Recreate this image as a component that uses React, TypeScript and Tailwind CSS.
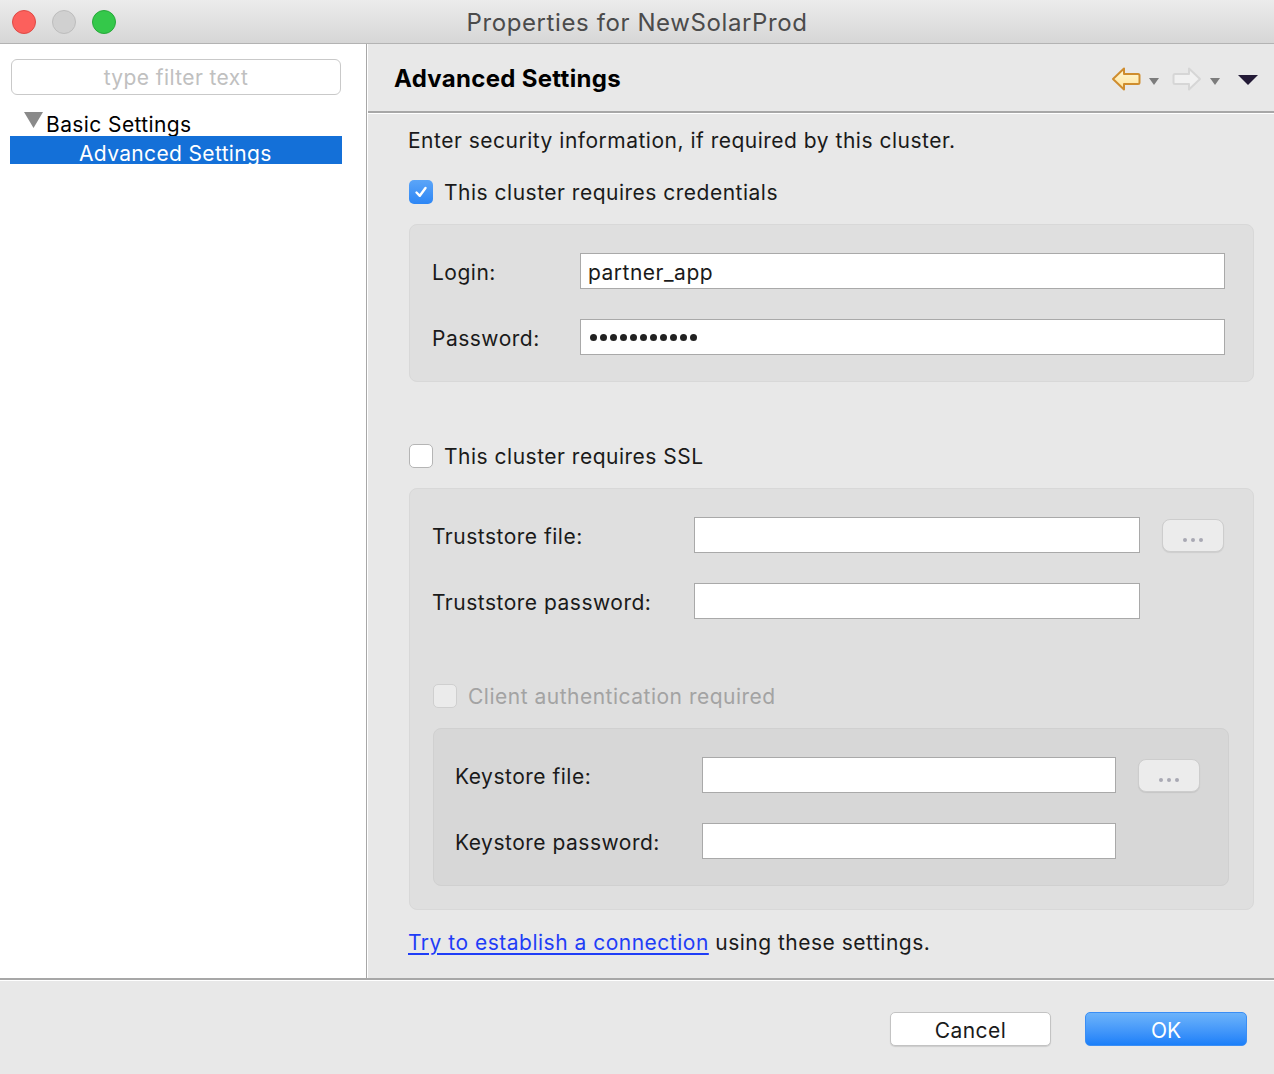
import React from "react"

function TrafficLights() {
  return (
    <div className="absolute left-[12px] top-[10px] flex gap-[16px]">
      <div className="w-[24px] h-[24px] rounded-full bg-[#fc605c] border border-[#de4a45]" />
      <div className="w-[24px] h-[24px] rounded-full bg-[#d0d0d0] border border-[#bdbdbd]" />
      <div className="w-[24px] h-[24px] rounded-full bg-[#34c84a] border border-[#27a83a]" />
    </div>
  )
}

function SmallCaret() {
  return (
    <svg width="10" height="7" viewBox="0 0 10 7" className="ml-[8px] mt-[4px]">
      <path d="M0 0 H10 L5 7 Z" fill="#7c7c7c" />
    </svg>
  )
}

function NavArrow({ back }: { back: boolean }) {
  return (
    <svg width="30" height="26" viewBox="0 0 30 26" style={back ? undefined : { transform: "scaleX(-1)" }}>
      <defs>
        <linearGradient id="arrowFill" x1="0" y1="0" x2="0" y2="1">
          <stop offset="0" stopColor="#fff8d8" />
          <stop offset="1" stopColor="#ffe39a" />
        </linearGradient>
      </defs>
      <path
        d="M2 13 L13 2.5 V8 H27 Q28.5 8 28.5 9.5 V16.5 Q28.5 18 27 18 H13 V23.5 Z"
        fill={back ? "url(#arrowFill)" : "#f1f1f1"}
        stroke={back ? "#cf8d2e" : "#d6d6d6"}
        strokeWidth="2"
        strokeLinejoin="round"
      />
    </svg>
  )
}

function TextBox({ value, width, password }: { value?: string; width: string; password?: boolean }) {
  return (
    <div className={`${width} h-[36px] bg-white border border-[#a9a9a9] flex items-center px-[7px] pt-[3px] text-[21px] tracking-[0.5px] text-[#1a1a1a]`}>
      {password ? (
        <div className="flex gap-[3px] ml-[2px] -mt-[2px]">
          {Array.from({ length: 11 }).map((_, i) => (
            <div key={i} className="w-[7px] h-[7px] rounded-full bg-[#222]" />
          ))}
        </div>
      ) : (
        value
      )}
    </div>
  )
}

function BrowseButton() {
  return (
    <div className="w-[62px] h-[33px] rounded-[8px] bg-[#ececec] border border-[#cdcdcd] shadow-[0_1px_1px_rgba(0,0,0,0.08)] flex items-end justify-center pb-[9px] gap-[4px]">
      <div className="w-[4px] h-[4px] rounded-full bg-[#a9a9b4]" />
      <div className="w-[4px] h-[4px] rounded-full bg-[#a9a9b4]" />
      <div className="w-[4px] h-[4px] rounded-full bg-[#a9a9b4]" />
    </div>
  )
}

export default function App() {
  return (
    <div className="w-[1274px] h-[1074px] flex flex-col bg-[#e8e8e8] font-[Inter,'Noto_Sans',sans-serif] text-[#1a1a1a] overflow-hidden">
      {/* Title bar */}
      <div className="relative h-[44px] flex-shrink-0 bg-gradient-to-b from-[#ececec] to-[#d6d6d6] border-b border-[#b3b3b3] flex items-center justify-center pt-[2px]">
        <TrafficLights />
        <span className="text-[24px] leading-[28px] text-[#4b4b4b] tracking-[0.6px]">Properties for NewSolarProd</span>
      </div>

      {/* Body */}
      <div className="flex h-[934px] flex-shrink-0">
        {/* Left tree panel */}
        <div className="w-[366px] bg-white flex flex-col pt-[15px] pl-[10px] pr-[24px]">
          <div className="ml-[1px] w-[330px] h-[36px] rounded-[6px] border border-[#c9c9c9] flex items-center justify-center pt-[2px] text-[21px] tracking-[0.4px] text-[#c0c0c0]">
            type filter text
          </div>
          <div className="mt-[13px] h-[28px] overflow-hidden flex items-start">
            <svg width="19" height="16" viewBox="0 0 19 16" className="ml-[14px] mt-[4px] flex-shrink-0">
              <path d="M0 0 H19 L9.5 16 Z" fill="#8a8a8a" />
            </svg>
            <span className="ml-[3px] text-[21px] tracking-[0.4px] leading-[28px] pt-[3px] text-black whitespace-nowrap">Basic Settings</span>
          </div>
          <div className="w-[332px] h-[28px] overflow-hidden bg-[#1470d8]">
            <span className="block pl-[69px] pt-[4px] text-[21px] tracking-[0.35px] leading-[28px] text-white whitespace-nowrap">Advanced Settings</span>
          </div>
        </div>

        {/* Splitter */}
        <div className="w-[2px] bg-[#a7a7a7]" />
        <div className="w-[1px] bg-white" />

        {/* Right panel */}
        <div className="flex-1 flex flex-col text-[21px] tracking-[0.5px]">
          <div className="h-[67px] flex items-center pl-[26px] pr-[16px] pt-[3px]">
            <span className="text-[24px] font-bold tracking-[0.3px] text-black">Advanced Settings</span>
            <div className="ml-auto flex items-center">
              <NavArrow back />
              <SmallCaret />
              <div className="w-[13px]" />
              <NavArrow back={false} />
              <SmallCaret />
              <svg width="20" height="10" viewBox="0 0 20 10" className="ml-[18px] mt-[2px]">
                <path d="M0 0 H20 L10 10 Z" fill="#231a36" />
              </svg>
            </div>
          </div>
          <div className="h-[2px] bg-[#a7a7a7]" />
          <div className="h-[1px] bg-white" />

          <div className="flex-1 flex flex-col pl-[40px] pr-[20px]">
            <div className="mt-[15px] leading-[24px]">Enter security information, if required by this cluster.</div>

            <div className="mt-[27px] h-[24px] flex items-center leading-[24px]">
              <div className="w-[24px] h-[24px] ml-[1px] rounded-[5px] bg-gradient-to-b from-[#5ba5f8] to-[#2c86f5] flex items-center justify-center">
                <svg width="16" height="16" viewBox="0 0 16 16">
                  <path d="M3.5 8.5 L6.8 11.8 L12.5 4" fill="none" stroke="white" strokeWidth="2.4" strokeLinecap="round" strokeLinejoin="round" />
                </svg>
              </div>
              <span className="ml-[11px] pt-[2px]">This cluster requires credentials</span>
            </div>

            {/* Credentials group */}
            <div className="mt-[20px] ml-[1px] rounded-[8px] bg-[#dfdfdf] border border-[#d8d8d8] pl-[22px] pr-[28px] pt-[28px] pb-[26px] flex flex-col gap-[30px] leading-[24px]">
              <div className="flex items-center">
                <span className="w-[148px] pt-[3px]">Login:</span>
                <TextBox value="partner_app" width="flex-1" />
              </div>
              <div className="flex items-center">
                <span className="w-[148px] pt-[3px]">Password:</span>
                <TextBox password width="flex-1" />
              </div>
            </div>

            <div className="mt-[62px] h-[24px] flex items-center leading-[24px]">
              <div className="w-[24px] h-[24px] ml-[1px] rounded-[5px] bg-white border border-[#b5b5b5]" />
              <span className="ml-[11px] pt-[2px]">This cluster requires SSL</span>
            </div>

            {/* SSL group */}
            <div className="mt-[20px] ml-[1px] h-[422px] rounded-[8px] bg-[#dfdfdf] border border-[#d8d8d8] pl-[22px] pr-[28px] pt-[28px] flex flex-col leading-[24px]">
              <div className="flex items-center">
                <span className="w-[262px] pt-[3px]">Truststore file:</span>
                <TextBox width="w-[446px]" />
                <div className="ml-[22px]">
                  <BrowseButton />
                </div>
              </div>
              <div className="mt-[30px] flex items-center">
                <span className="w-[262px] pt-[3px]">Truststore password:</span>
                <TextBox width="w-[446px]" />
              </div>

              <div className="mt-[65px] ml-[1px] h-[24px] flex items-center">
                <div className="w-[24px] h-[24px] rounded-[5px] bg-[#ebebeb] border border-[#cfcfcf]" />
                <span className="ml-[11px] pt-[2px] text-[#a3a3a3]">Client authentication required</span>
              </div>

              {/* Keystore group */}
              <div className="mt-[20px] ml-[1px] mr-[-4px] rounded-[8px] bg-[#d7d7d7] border border-[#d0d0d0] pl-[21px] pr-[28px] pt-[28px] pb-[26px] flex flex-col gap-[30px]">
                <div className="flex items-center">
                  <span className="w-[247px] pt-[3px]">Keystore file:</span>
                  <TextBox width="w-[414px]" />
                  <div className="ml-[22px]">
                    <BrowseButton />
                  </div>
                </div>
                <div className="flex items-center">
                  <span className="w-[247px] pt-[3px]">Keystore password:</span>
                  <TextBox width="w-[414px]" />
                </div>
              </div>
            </div>

            <div className="mt-[21px] leading-[24px]">
              <span className="text-[#1f3df7] underline underline-offset-[3px] decoration-[2px]">Try to establish a connection</span>
              <span> using these settings.</span>
            </div>
          </div>
        </div>
      </div>

      {/* Footer */}
      <div className="h-[2px] bg-[#a7a7a7] flex-shrink-0" />
      <div className="h-[1px] bg-white flex-shrink-0" />
      <div className="flex-1 flex items-start justify-end pt-[31px] pr-[27px] gap-[34px]">
        <div className="w-[161px] h-[34px] rounded-[5px] bg-white border border-[#c3c3c3] shadow-[0_1px_1px_rgba(0,0,0,0.12)] flex items-center justify-center text-[21px] tracking-[0.4px] pt-[3px] text-[#1a1a1a]">
          Cancel
        </div>
        <div className="w-[162px] h-[34px] rounded-[5px] bg-gradient-to-b from-[#6cb3fa] to-[#1a7ff9] border border-[#3a8ef5] flex items-center justify-center text-[21px] pt-[3px] text-white">
          OK
        </div>
      </div>
    </div>
  )
}
